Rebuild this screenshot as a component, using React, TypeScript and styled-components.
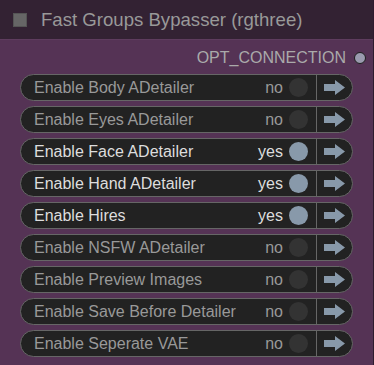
import React from "react";
import styled, { createGlobalStyle } from "styled-components";

const GlobalStyle = createGlobalStyle`
    html, body {
        margin: 0;
        padding: 0;
        background: #553355;
        font-family: "Liberation Sans", Arial, sans-serif;
    }
`;

const Node = styled.div`
    width: 373px;
    height: 365px;
    background: #553355;
    border-right: 1px solid #2e1c2e;
    display: flex;
    flex-direction: column;
`;

const TitleBar = styled.div`
    height: 40px;
    background: #332233;
    display: flex;
    align-items: center;
    gap: 14px;
    padding-left: 13px;
    box-sizing: border-box;
    border-bottom: 1px solid #5e3c5e;
`;

const TitleBox = styled.div`
    width: 14px;
    height: 14px;
    background: #666;
    box-sizing: border-box;
    border: 1px solid #555;
`;

const Title = styled.span`
    color: #999;
    font-size: 18.6px;
`;

const OutputRow = styled.div`
    height: 16px;
    margin-top: 10px;
    display: flex;
    justify-content: flex-end;
    align-items: center;
    gap: 8px;
    padding-right: 7px;
    color: #aaa;
    font-size: 16px;
`;

const Slot = styled.div`
    width: 12px;
    height: 12px;
    border-radius: 50%;
    background: #9a9aae;
    box-sizing: border-box;
    border: 1px solid #1e1e1e;
`;

const List = styled.div`
    display: flex;
    flex-direction: column;
    gap: 5px;
    margin-top: 8px;
    padding-left: 20px;
    width: 353px;
    box-sizing: border-box;
`;

const Row = styled.div`
    height: 27px;
    display: flex;
    align-items: stretch;
    background: #222;
    border: 1px solid #666;
    border-radius: 14px;
    box-sizing: border-box;
`;

const Main = styled.div<{ $on: boolean }>`
    flex: 1;
    display: flex;
    align-items: center;
    padding-left: 13px;
    padding-right: 8px;
    font-size: 16px;
    color: ${({ $on }) => ($on ? "#ddd" : "#999")};
`;

const Label = styled.span`
    flex: 1;
`;

const Value = styled.span`
    margin-right: 6px;
`;

const Toggle = styled.div<{ $on: boolean }>`
    width: 19px;
    height: 19px;
    border-radius: 50%;
    background: ${({ $on }) => ($on ? "#89a" : "#333")};
`;

const ArrowButton = styled.div`
    width: 36px;
    border-left: 1px solid #666;
    display: flex;
    align-items: center;
    padding-left: 7px;
    box-sizing: border-box;
`;

const Arrow = () => (
    <svg width="21" height="15" viewBox="0 0 21 15">
        <path d="M0 4 H11 V0 L21 7.5 L11 15 V11 H0 Z" fill="#89a" />
    </svg>
);

const groups = [
    { name: "Enable Body ADetailer", on: false },
    { name: "Enable Eyes ADetailer", on: false },
    { name: "Enable Face ADetailer", on: true },
    { name: "Enable Hand ADetailer", on: true },
    { name: "Enable Hires", on: true },
    { name: "Enable NSFW ADetailer", on: false },
    { name: "Enable Preview Images", on: false },
    { name: "Enable Save Before Detailer", on: false },
    { name: "Enable Seperate VAE", on: false },
];

const App: React.FC = () => (
    <>
        <GlobalStyle />
        <Node>
            <TitleBar>
                <TitleBox />
                <Title>Fast Groups Bypasser (rgthree)</Title>
            </TitleBar>
            <OutputRow>
                <span>OPT_CONNECTION</span>
                <Slot />
            </OutputRow>
            <List>
                {groups.map((g) => (
                    <Row key={g.name}>
                        <Main $on={g.on}>
                            <Label>{g.name}</Label>
                            <Value>{g.on ? "yes" : "no"}</Value>
                            <Toggle $on={g.on} />
                        </Main>
                        <ArrowButton>
                            <Arrow />
                        </ArrowButton>
                    </Row>
                ))}
            </List>
        </Node>
    </>
);

export default App;
